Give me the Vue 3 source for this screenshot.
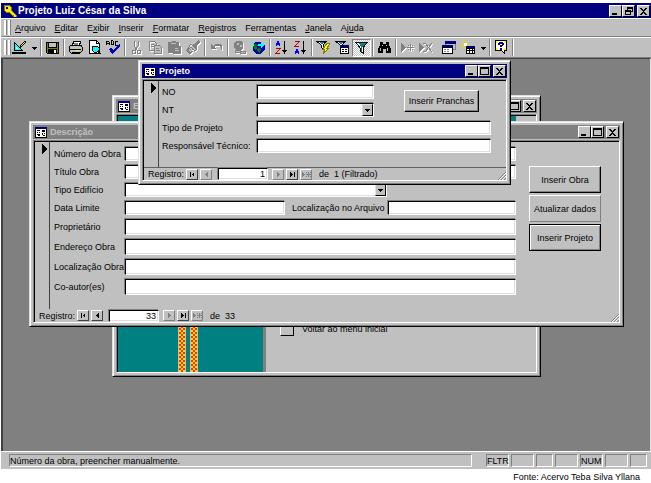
<template>
  <div class="app">
    <header class="titlebar main-title">
      <svg class="app-icon" width="14" height="13" viewBox="0 0 14 13">
        <path d="M1 1h5l2 2v3l5 5v2h-2l-1-2h-1l-3-3H3L1 6z" fill="#ffe900" stroke="#808000" stroke-width="1" />
        <path d="M3 3h2v2H3z" fill="#000080" />
      </svg>
      <h1>Projeto Luiz César da Silva</h1>
      <div class="controls">
        <button v-for="c in ['min', 'restore', 'close']" :key="c" type="button" :aria-label="c" :class="c">
          <svg width="9" height="8" viewBox="0 0 9 8"><path :d="glyphs[c]" fill="#000" /></svg>
        </button>
      </div>
    </header>

    <nav class="menubar">
      <span class="handle"></span>
      <a v-for="m in menus" :key="m[1] + m[2]" href="#">{{ m[0] }}<u>{{ m[1] }}</u>{{ m[2] }}</a>
    </nav>

    <div class="toolbar">
      <span class="handle"></span>
      <template v-for="(t, i) in tools" :key="i">
        <span v-if="t === '|'" class="sep"></span>
        <span v-else-if="t === ' '" class="space"></span>
        <button v-else type="button" :aria-label="t.name" :disabled="t.off" :class="{ pressed: t.on, arrow: t.arrow }">
          <svg :width="t.arrow ? 5 : 15" height="15" :viewBox="t.arrow ? '0 0 5 15' : '0 0 15 15'">
            <path v-for="(p, j) in t.paths" :key="j" :d="p[0]" :fill="p[1]" :stroke="p[2] || 'none'" />
          </svg>
        </button>
      </template>
      <span class="toolbar-end"></span>
    </div>

    <main class="desktop">
      <!-- Janela do menu, ao fundo -->
      <section class="window menu-window">
        <div class="titlebar inactive">
          <svg class="form-icon" width="12" height="11" viewBox="0 0 12 11"><path v-for="(p, j) in formIcon" :key="j" :d="p[0]" :fill="p[1]" /></svg>
          <h2>E</h2>
          <div class="controls">
            <button v-for="c in ['min', 'max', 'close']" :key="c" type="button" :aria-label="c" :class="c">
              <svg width="9" height="8" viewBox="0 0 9 8"><path :d="glyphs[c]" fill="#000" /></svg>
            </button>
          </div>
        </div>
        <div class="body menu-body">
          <div class="banner"></div>
          <div class="menu-columns">
            <div class="sidebar"><i></i><i></i></div>
            <div class="menu-options">
              <button id="voltar" type="button" class="square" aria-labelledby="voltar-label"></button>
              <label id="voltar-label" for="voltar">Voltar ao menu inicial</label>
            </div>
          </div>
        </div>
      </section>

      <!-- Descrição da obra -->
      <section class="window descricao">
        <div class="titlebar inactive">
          <svg class="form-icon" width="12" height="11" viewBox="0 0 12 11"><path v-for="(p, j) in formIcon" :key="j" :d="p[0]" :fill="p[1]" /></svg>
          <h2>Descrição</h2>
          <div class="controls">
            <button v-for="c in ['min', 'max', 'close']" :key="c" type="button" :aria-label="c" :class="c">
              <svg width="9" height="8" viewBox="0 0 9 8"><path :d="glyphs[c]" fill="#000" /></svg>
            </button>
          </div>
        </div>
        <div class="body">
          <div class="record">
            <div class="selector"><svg width="5" height="10" viewBox="0 0 5 10"><path d="M0 0l5 5-5 5z" /></svg></div>
            <form class="obra-form" @submit.prevent>
              <div class="row"><label for="numero">Número da Obra</label><input id="numero" type="text"></div>
              <div class="row"><label for="titulo">Título Obra</label><input id="titulo" type="text"></div>
              <div class="row">
                <label for="edificio">Tipo Edifício</label>
                <span class="combo short">
                  <select id="edificio"><option></option></select>
                  <span class="drop"><svg width="5" height="3" viewBox="0 0 5 3"><path d="M0 0h5L2.500 3z" /></svg></span>
                </span>
              </div>
              <div class="row">
                <label for="data">Data Limite</label><input id="data" type="text" class="date">
                <label for="local" class="second">Localização no Arquivo</label><input id="local" type="text">
              </div>
              <div v-for="f in campos" :key="f.id" class="row tall">
                <label :for="f.id">{{ f.label }}</label><input :id="f.id" type="text">
              </div>
            </form>
            <div class="actions">
              <button type="button" class="push">Inserir Obra</button>
              <button type="button" class="push flat">Atualizar dados</button>
              <button type="button" class="push default">Inserir Projeto</button>
            </div>
          </div>
          <div class="navigator">
            <label for="reg-obra">Registro:</label>
            <button type="button" aria-label="Primeiro"><svg width="7" height="7" viewBox="0 0 7 7"><path :d="nav.first" /></svg></button>
            <button type="button" aria-label="Anterior"><svg width="7" height="7" viewBox="0 0 7 7"><path :d="nav.prev" /></svg></button>
            <input id="reg-obra" v-model="registroObra" type="text">
            <button type="button" aria-label="Próximo" disabled><svg width="7" height="7" viewBox="0 0 7 7"><path :d="nav.next" /></svg></button>
            <button type="button" aria-label="Último"><svg width="7" height="7" viewBox="0 0 7 7"><path :d="nav.last" /></svg></button>
            <button type="button" aria-label="Novo" disabled><svg width="9" height="7" viewBox="0 0 9 7"><path :d="nav.add" /></svg></button>
            <span class="total">de&nbsp; 33</span>
            <svg class="grip" width="8" height="8" viewBox="0 0 8 8"><path d="M0 8L8 0M3 8l5-5M6 8l2-2" stroke="#808080" /><path d="M1 8l7-7M4 8l4-4" stroke="#fff" /></svg>
          </div>
        </div>
      </section>

      <!-- Projeto, janela ativa -->
      <section class="window projeto">
        <div class="titlebar">
          <svg class="form-icon" width="12" height="11" viewBox="0 0 12 11"><path v-for="(p, j) in formIcon" :key="j" :d="p[0]" :fill="p[1]" /></svg>
          <h2>Projeto</h2>
          <div class="controls">
            <button v-for="c in ['min', 'max', 'close']" :key="c" type="button" :aria-label="c" :class="c">
              <svg width="9" height="8" viewBox="0 0 9 8"><path :d="glyphs[c]" fill="#000" /></svg>
            </button>
          </div>
        </div>
        <div class="body">
          <div class="record">
            <div class="selector"><svg width="5" height="10" viewBox="0 0 5 10"><path d="M0 0l5 5-5 5z" /></svg></div>
            <form class="projeto-form" @submit.prevent>
              <label for="no">NO</label><input id="no" type="text">
              <label for="nt">NT</label>
              <span class="combo">
                <select id="nt"><option></option></select>
                <span class="drop"><svg width="5" height="3" viewBox="0 0 5 3"><path d="M0 0h5L2.500 3z" /></svg></span>
              </span>
              <button type="button" class="push pranchas">Inserir Pranchas</button>
              <label for="tipo">Tipo de Projeto</label><input id="tipo" type="text" class="wide">
              <label for="resp">Responsável Técnico:</label><input id="resp" type="text" class="wide">
            </form>
          </div>
          <div class="navigator">
            <label for="reg-projeto">Registro:</label>
            <button type="button" aria-label="Primeiro"><svg width="7" height="7" viewBox="0 0 7 7"><path :d="nav.first" /></svg></button>
            <button type="button" aria-label="Anterior" disabled><svg width="7" height="7" viewBox="0 0 7 7"><path :d="nav.prev" /></svg></button>
            <input id="reg-projeto" v-model="registroProjeto" type="text">
            <button type="button" aria-label="Próximo" disabled><svg width="7" height="7" viewBox="0 0 7 7"><path :d="nav.next" /></svg></button>
            <button type="button" aria-label="Último"><svg width="7" height="7" viewBox="0 0 7 7"><path :d="nav.last" /></svg></button>
            <button type="button" aria-label="Novo" disabled><svg width="9" height="7" viewBox="0 0 9 7"><path :d="nav.add" /></svg></button>
            <span class="total">de&nbsp; 1 (Filtrado)</span>
            <svg class="grip" width="8" height="8" viewBox="0 0 8 8"><path d="M0 8L8 0M3 8l5-5M6 8l2-2" stroke="#808080" /><path d="M1 8l7-7M4 8l4-4" stroke="#fff" /></svg>
          </div>
        </div>
      </section>
    </main>

    <footer class="statusbar">
      <span class="cell message">Número da obra, preencher manualmente.</span>
      <span class="cell">FLTR</span>
      <span class="cell"></span>
      <span class="cell narrow"></span>
      <span class="cell"></span>
      <span class="cell">NUM</span>
      <span class="cell"></span>
      <span class="cell narrow"></span>
    </footer>
    <p class="caption">Fonte: Acervo Teba Silva Yllana</p>
  </div>
</template>

<script setup>
import { ref } from 'vue';

const registroObra = ref('33');
const registroProjeto = ref('1');

// [antes, letra sublinhada, depois]
const menus = [
  ['', 'A', 'rquivo'],
  ['', 'E', 'ditar'],
  ['E', 'x', 'ibir'],
  ['', 'I', 'nserir'],
  ['', 'F', 'ormatar'],
  ['', 'R', 'egistros'],
  ['Ferra', 'm', 'entas'],
  ['', 'J', 'anela'],
  ['Aj', 'u', 'da'],
];

const campos = [
  { id: 'proprietario', label: 'Proprietário' },
  { id: 'endereco', label: 'Endereço Obra' },
  { id: 'localizacao', label: 'Localização Obra' },
  { id: 'coautor', label: 'Co-autor(es)' },
];

const glyphs = {
  min: 'M1 6h5v2H1z',
  max: 'M0 0h9v8H0zM1 2v5h7V2z',
  restore: 'M3 0h6v5H7V4h1V2H4v1H3zM1 3h6v5H1zM2 5v2h4V5z',
  close: 'M1 1h2v1h1v1h1V2h1V1h2v1H7v1H6v1H5v1h1v1h1v1h1v1H6V7H5V6H4v1H3v1H1V7h1V6h1V5h1V4H3V3H2V2H1z',
};

const nav = {
  first: 'M1 1h1v5H1zM5 1v5L3 3.500z',
  prev: 'M5 1v5L2 3.500z',
  next: 'M2 1v5l3-2.500z',
  last: 'M1 1v5l3-2.500zM5 1h1v5H5z',
  add: 'M0 1v5l3-2.500zM6 1h1v5H6zM4 3h5v1H4zM4 1h1v1H4zM8 1h1v1H8zM4 5h1v1H4zM8 5h1v1H8z',
};

const formIcon = [
  ['M0 0h12v11H0z', '#000'],
  ['M0 0h12v2H0z', '#000080'],
  ['M1 2h10v8H1z', '#fff'],
  ['M2 3h3v1H2zM2 5h1v1H2zM4 5h1v1H4zM2 7h3v1H2zM3 8h2v1H3zM7 3h3v2H7zM7 6h1v2H7zM9 6h1v1H9zM8 8h2v1H8z', '#000'],
];

const arrow = { name: 'Mais opções', arrow: true, paths: [['M0 7h5L2.500 10z', '#000']] };

// Cada ícone é uma lista de [d, fill, stroke]
const tools = [
  { name: 'Modo', paths: [
    ['M2.500 2.500v8h8z', '#00ffff', '#000'], ['M4 7v2h2z', '#fff'], ['M0 12h14v2H0z', '#000'],
    ['M8 8l1-3 4-4 1 1-4 4z', '#ffff00', '#000'],
  ] },
  arrow,
  '|',
  { name: 'Salvar', paths: [
    ['M1 2h13v12H2l-1-1z', '#000'], ['M2 3h1v10H2zM12 3h1v10h-1zM3 8h9v1H3z', '#808000'],
    ['M4 3h7v4H4z', '#c0c0c0'], ['M9 10h2v3H9z', '#fff'],
  ] },
  '|',
  { name: 'Imprimir', paths: [
    ['M4 6l2-5h7l-2 5z', '#fff', '#000'], ['M6 3h4M5.500 4.500h4', 'none', '#808080'],
    ['M1 7l2-2h10l1 2v4l-2 2H3l-2-2z', '#c0c0c0', '#000'], ['M1 9h12v1H1zM4 12h8v1H4z', '#000'], ['M8 10h3v1H8z', '#ffff00'],
  ] },
  { name: 'Visualizar', paths: [
    ['M2.500 .5h7l3 3v10h-10z', '#fff', '#000'], ['M9.500 .5v3h3', 'none', '#000'],
    ['M6 6h4l2 2v2l-2 2H7L5 10V7z', '#00ffff', '#000'], ['M10 11l4 3', 'none', '#000'],
  ] },
  { name: 'Verificar ortografia', paths: [
    ['M0 5V2l1-1h1l1 1v3M0 3.500h3M5 .5v4h2V1zM12 1H9v4h3', 'none', '#000'],
    ['M3 9l2-1 2 2 6-6h1v2l-7 8H6z', '#0000c0'],
  ] },
  '|',
  { name: 'Recortar', off: true, paths: [
    ['M5 1v5l4 5M9 1v5l-4 5', 'none', '#808080'], ['M3.500 10.500h3v3h-3zM8.500 10.500h3v3h-3z', 'none', '#808080'],
  ] },
  { name: 'Copiar', off: true, paths: [
    ['M1.500 1.500h5l2 2v7h-7z', 'none', '#808080'], ['M6.500 5.500h5l2 2v6h-7z', '#c0c0c0', '#808080'],
    ['M3 4h3v1H3zM3 6h3v1H3zM8 8h3v1H8zM8 10h4v1H8z', '#808080'],
  ] },
  { name: 'Colar', off: true, paths: [
    ['M1 2h3l1-1h3l1 1h3v4h2v8H6v-1H1z', '#808080'], ['M4 3h5v1H4zM8 8h3v1H8zM8 10h4v1H8z', '#c0c0c0'],
  ] },
  { name: 'Pincel', off: true, paths: [
    ['M9 4l3-4 2 2-3 4z', '#808080'], ['M5 4l6 5-2 2-6-5z', 'none', '#808080'],
    ['M2 7l5 5-3 2-4-3zM7 4h4v5H9z', '#808080'], ['M3 9l2 3M5 8l1 3', 'none', '#c0c0c0'],
  ] },
  '|',
  { name: 'Desfazer', off: true, paths: [
    ['M2 4v5h5L5 7l2-1h3l2 1v3h1V6l-2-2H7L4 6z', '#808080'],
  ] },
  '|',
  { name: 'Inserir hiperlink', off: true, paths: [
    ['M4 1h5l2 2v5l-2 2H4L2 8V3z', '#808080'], ['M5 3h2v2H5zM8 5h2v2H8z', '#c0c0c0'],
    ['M3.500 10.500h5v2h-5zM8.500 11.500h5v2h-5z', '#c0c0c0', '#808080'],
  ] },
  { name: 'Barra Web', paths: [
    ['M5 2h5l3 3v5l-3 3H5l-3-3V5z', '#0000c0', '#000080'], ['M3 4l4 1-1 3-2 2-2-4zM7 8l3 1-1 4-3-2z', '#008000'],
    ['M7 4h3V2l4 3-4 3V6H7zM3 5V2H1l2 5z', '#00ffff'],
  ] },
  '|',
  { name: 'Classificar crescente', paths: [
    ['M2 6l2-5 2 5M2.500 4.500h3', 'none', '#0000ff'], ['M2 8.500h4L2 13.500h4', 'none', '#c00000'],
    ['M10 1h1v9h2l-2.500 4L8 10h2z', '#000'],
  ] },
  { name: 'Classificar decrescente', paths: [
    ['M2 1.500h4L2 6.500h4', 'none', '#c00000'], ['M2 14l2-5 2 5M2.500 12.500h3', 'none', '#0000ff'],
    ['M10 1h1v9h2l-2.500 4L8 10h2z', '#000'],
  ] },
  '|',
  { name: 'Filtrar por seleção', paths: [
    ['M1 1.500h9L7 5v4L5 7V5z', '#fff', '#000'], ['M3 2h5L6 5z', '#008080'],
    ['M11 3l3 1-3 4h2l-6 6 2-5H7z', '#ffff00', '#808000'],
  ] },
  { name: 'Filtrar por formulário', paths: [
    ['M1 1.500h9L7 5v4L5 7V5z', '#fff', '#000'], ['M3 2h5L6 5z', '#008080'],
    ['M5 6h9v8H5z', '#000'], ['M5 5h9v2H5z', '#000080'], ['M6 8h7v5H6z', '#fff'], ['M7 9h2v1H7zM10 9h2v1h-2zM7 11h2v1H7zM10 11h2v1h-2z', '#000'],
  ] },
  { name: 'Aplicar filtro', on: true, paths: [
    ['M2 2.500h11L9 8v5l-3-2V8z', '#fff', '#000'], ['M5 3h7L8 8v4H7V7z', '#008080'],
  ] },
  '|',
  { name: 'Localizar', paths: [
    ['M3 2h3v2h3V2h3v3l2 4v4H9V9H6v4H1V9l2-4z', '#000'], ['M3 8h1v3H3zM10 8h1v3h-1zM5 5h1v1H5zM9 5h1v1H9z', '#c0c0c0'],
  ] },
  '|',
  { name: 'Novo registro', off: true, paths: [
    ['M1 3l5 4.500L1 12z', '#808080'], ['M10 4h1v3h3v1h-3v3h-1V8H7V7h3zM8 5h1v1H8zM12 5h1v1h-1zM8 9h1v1H8zM12 9h1v1h-1z', '#808080'],
  ] },
  { name: 'Excluir registro', off: true, paths: [
    ['M0 3l5 4.500L0 12zM4 3h3v1H4zM4 11h3v1H4z', '#808080'], ['M6 3l7 9M13 3l-7 9', 'none', '#808080'],
  ] },
  ' ',
  { name: 'Janela do banco de dados', paths: [
    ['M3 1h11v9H3z', '#808080'], ['M3 1h11v3H3z', '#000080'], ['M4 4h9v5H4z', '#c0c0c0'],
    ['M0 5h11v9H0z', '#000'], ['M0 5h11v2H0z', '#000080'], ['M1 8h9v5H1z', '#fff'], ['M2 9h2v1H2zM5 9h2v1H5zM2 11h2v1H2zM5 11h2v1H5z', '#808080'],
  ] },
  { name: 'Novo objeto', paths: [
    ['M4 0h1v9H4zM0 4h9v1H0zM1 1h1v1H1zM2 2h1v1H2zM7 1h1v1H7zM6 2h1v1H6zM2 6h1v1H2zM1 7h1v1H1z', '#e8e000'], ['M3 3h3v3H3z', '#fff'],
    ['M5 6h9v8H5z', '#000'], ['M5 6h9v2H5z', '#000080'], ['M6 9h2v1H6zM9 9h2v1H9zM12 9h1v1h-1zM6 11h2v2H6zM9 11h2v2H9zM12 11h1v2h-1z', '#fff'],
  ] },
  arrow,
  '|',
  { name: 'Ajuda', paths: [
    ['M1.500 .5h11v10h-2v3l-3-3h-6z', '#fff', '#000'], ['M2 1h2v2H2zM10 1h2v2h-2zM2 8h2v2H2zM10 8h2v2h-2z', '#ffff00'],
    ['M5 2h4v1h1v2H9v1H8v1H6V5h2V4H6v1H4V3h1zM6 8h2v2H6z', '#000080'],
  ] },
];
</script>

<style>
body {
  background: #fff;
}
</style>

<style scoped>
* {
  box-sizing: border-box;
}
.app {
  display: flex;
  flex-direction: column;
  min-height: 100vh;
  padding: 3px 0 0 1px;
  font-family: "Liberation Sans", Arial, sans-serif;
  font-size: 9px;
  line-height: 12px;
  color: #000;
  background: #fff;
}
button,
input,
select {
  font: inherit;
  color: inherit;
  margin: 0;
  padding: 0;
  border-radius: 0;
  outline: none;
}
svg {
  display: block;
  flex: none;
  shape-rendering: crispEdges;
}
h1,
h2,
p {
  margin: 0;
}

/* Barras de título */
.titlebar {
  display: flex;
  align-items: center;
  height: 14px;
  padding: 0 1px 0 2px;
  background: #000080;
  color: #fff;
}
.titlebar h1,
.titlebar h2 {
  flex: 1;
  font-size: 9px;
  line-height: 14px;
  font-weight: bold;
  white-space: nowrap;
}
.main-title {
  height: 15px;
}
.titlebar h1 {
  font-size: 10px;
}
.titlebar.inactive {
  background: #808080;
  color: #c0c0c0;
}
.app-icon {
  margin-right: 1px;
}
.form-icon {
  margin-right: 3px;
}
.controls {
  display: flex;
}
.controls button {
  display: flex;
  align-items: center;
  justify-content: center;
  width: 13px;
  height: 12px;
  background: #c0c0c0;
  border: 1px solid;
  border-color: #fff #000 #000 #fff;
}
.controls .close {
  margin-left: 2px;
}

/* Menu e barra de ferramentas */
.menubar,
.toolbar {
  display: flex;
  align-items: center;
  background: #c0c0c0;
  border-top: 1px solid #fff;
  border-bottom: 1px solid #808080;
}
.menubar {
  height: 19px;
  gap: 9px;
}
.menubar a {
  color: #000;
  text-decoration: none;
}
.toolbar {
  height: 21px;
}
.handle {
  width: 6px;
  height: 15px;
  margin-left: 3px;
  border-left: 2px solid #fff;
  border-right: 2px solid #fff;
  box-shadow: 1px 0 #808080, inset 1px 0 #808080;
}
.menubar .handle {
  margin-right: -4px;
}
.toolbar button {
  display: flex;
  align-items: center;
  justify-content: center;
  width: 19px;
  height: 18px;
  background: none;
  border: none;
}
.toolbar button.arrow {
  width: 10px;
}
.toolbar button:disabled svg {
  filter: drop-shadow(1px 1px 0 #fff);
}
.toolbar button.pressed {
  border: 1px solid;
  border-color: #808080 #fff #fff #808080;
  background: repeating-conic-gradient(#fff 0 25%, #c0c0c0 0 50%) 0 0 / 2px 2px;
}
.sep,
.toolbar-end {
  width: 2px;
  height: 17px;
  margin: 0 1px;
  border-left: 1px solid #808080;
  border-right: 1px solid #fff;
}
.space {
  width: 4px;
}

/* Área de trabalho */
.desktop {
  position: relative;
  flex: 1;
  min-height: 340px;
  background: #808080;
  border-top: 1px solid #404040;
  border-left: 2px solid #404040;
  border-right: 1px solid #dfdfdf;
}
.window {
  position: absolute;
  padding: 3px;
  background: #c0c0c0;
  border: 1px solid;
  border-color: #dfdfdf #000 #000 #dfdfdf;
  box-shadow: inset 1px 1px #fff, inset -1px -1px #808080;
}
.menu-window {
  top: 36px;
  left: 109px;
  right: 109px;
}
.descricao {
  top: 62px;
  left: 26px;
  right: 26px;
}
.projeto {
  top: 1px;
  left: 135px;
  right: 139px;
}
.body {
  margin-top: 1px;
  border: 1px solid;
  border-color: #808080 #fff #fff #808080;
  box-shadow: inset 1px 1px #000;
  padding: 1px 0 0 1px;
}

.menu-body {
  display: flex;
  flex-direction: column;
  min-height: 259px;
}
.banner {
  height: 16px;
  margin-right: 20px;
  background: #008080;
}
.menu-columns {
  display: flex;
  flex: 1;
}
.sidebar {
  display: flex;
  justify-content: center;
  gap: 4px;
  width: 148px;
  padding-right: 5px;
  background: #008080;
  border-right: 3px solid #808080;
}
.sidebar i {
  width: 8px;
  border-left: 1px solid #c0c0c0;
  border-right: 1px solid #c0c0c0;
  background: repeating-conic-gradient(#ffe000 0 25%, #ff3000 0 50%) 0 0 / 4px 4px;
}
.menu-options {
  display: flex;
  align-items: center;
  align-self: flex-end;
  gap: 8px;
  padding: 0 0 36px 14px;
}
.square {
  width: 14px;
  height: 14px;
  background: #c0c0c0;
  border: 1px solid;
  border-color: #fff #000 #000 #fff;
}

/* Registro */
.record {
  display: flex;
}
.selector {
  width: 15px;
  padding: 2px 0 0 7px;
  border-right: 1px solid #404040;
}
.obra-form {
  display: flex;
  flex-direction: column;
  flex: 1;
  gap: 4px;
  padding: 5px 0 14px 4px;
}
.row {
  display: flex;
  align-items: center;
  height: 14px;
}
.row.tall {
  height: 16px;
}
.row label {
  flex: none;
  width: 71px;
  white-space: nowrap;
}
.row .second {
  width: 103px;
  padding-left: 7px;
}
input,
select {
  width: 100%;
  min-width: 0;
  height: 100%;
  background: #fff;
  border: 1px solid;
  border-color: #000 #fff #fff #000;
  box-shadow: inset -1px -1px #dfdfdf, -1px -1px #808080;
}
.row input {
  flex: 1;
}
.row .date {
  flex: 0 0 160px;
}
.combo {
  position: relative;
  display: block;
  height: 14px;
}
.combo.short {
  width: 262px;
}
.combo select {
  display: block;
  appearance: none;
}
.drop {
  position: absolute;
  top: 1px;
  right: 1px;
  bottom: 1px;
  width: 11px;
  display: flex;
  align-items: center;
  justify-content: center;
  background: #c0c0c0;
  border: 1px solid;
  border-color: #dfdfdf #000 #000 #dfdfdf;
  pointer-events: none;
}
.actions {
  display: flex;
  flex-direction: column;
  gap: 2px;
  padding: 24px 18px 0 13px;
}
.push {
  width: 72px;
  height: 27px;
  background: #c0c0c0;
  border: 1px solid;
  border-color: #fff #000 #000 #fff;
  box-shadow: inset -1px -1px #808080;
  white-space: nowrap;
}
.push.flat {
  border-color: #fff #808080 #808080 #fff;
  box-shadow: none;
}
.push.default {
  border-color: #000;
  box-shadow: inset 1px 1px #fff, inset -1px -1px #808080;
}
.projeto-form {
  flex: 1;
  display: grid;
  grid-template-columns: 95px 117px 1fr;
  grid-auto-rows: 14px;
  row-gap: 4px;
  align-items: center;
  padding: 4px 15px 14px 3px;
}
.projeto-form .wide {
  grid-column: 2 / -1;
}
.projeto-form .pranchas {
  grid-column: 3;
  grid-row: 1 / span 2;
  justify-self: end;
  width: 75px;
  height: 22px;
  margin-right: 12px;
}

/* Navegação entre registros */
.navigator {
  display: flex;
  align-items: center;
  gap: 2px;
  height: 13px;
  padding-left: 4px;
}
.projeto .navigator {
  border-top: 1px solid #606060;
}
.navigator label {
  width: 36px;
}
.navigator button {
  display: flex;
  align-items: center;
  justify-content: center;
  width: 12px;
  height: 11px;
  background: #c0c0c0;
  border: 1px solid;
  border-color: #fff #404040 #404040 #fff;
}
.navigator button:disabled {
  border-color: #fff #808080 #808080 #fff;
}
.navigator button:disabled path {
  fill: #808080;
}
.navigator input {
  width: 50px;
  height: 12px;
  margin: 0 2px 0 4px;
  padding-right: 2px;
  text-align: right;
}
.total {
  flex: 1;
  padding-left: 5px;
  white-space: nowrap;
}
.grip {
  align-self: flex-end;
  shape-rendering: auto;
}

/* Barra de status */
.statusbar {
  display: flex;
  align-items: center;
  gap: 2px;
  height: 18px;
  padding: 0 4px 0 8px;
  background: #c0c0c0;
  border-top: 1px solid #fff;
}
.cell {
  width: 23px;
  height: 13px;
  border: 1px solid;
  border-color: #808080 #fff #fff #808080;
  white-space: nowrap;
}
.cell.narrow {
  width: 17px;
}
.cell.message {
  flex: 1;
  width: auto;
  margin-right: 12px;
}
.caption {
  padding: 3px 11px 0 0;
  line-height: 11px;
  text-align: right;
}
</style>
